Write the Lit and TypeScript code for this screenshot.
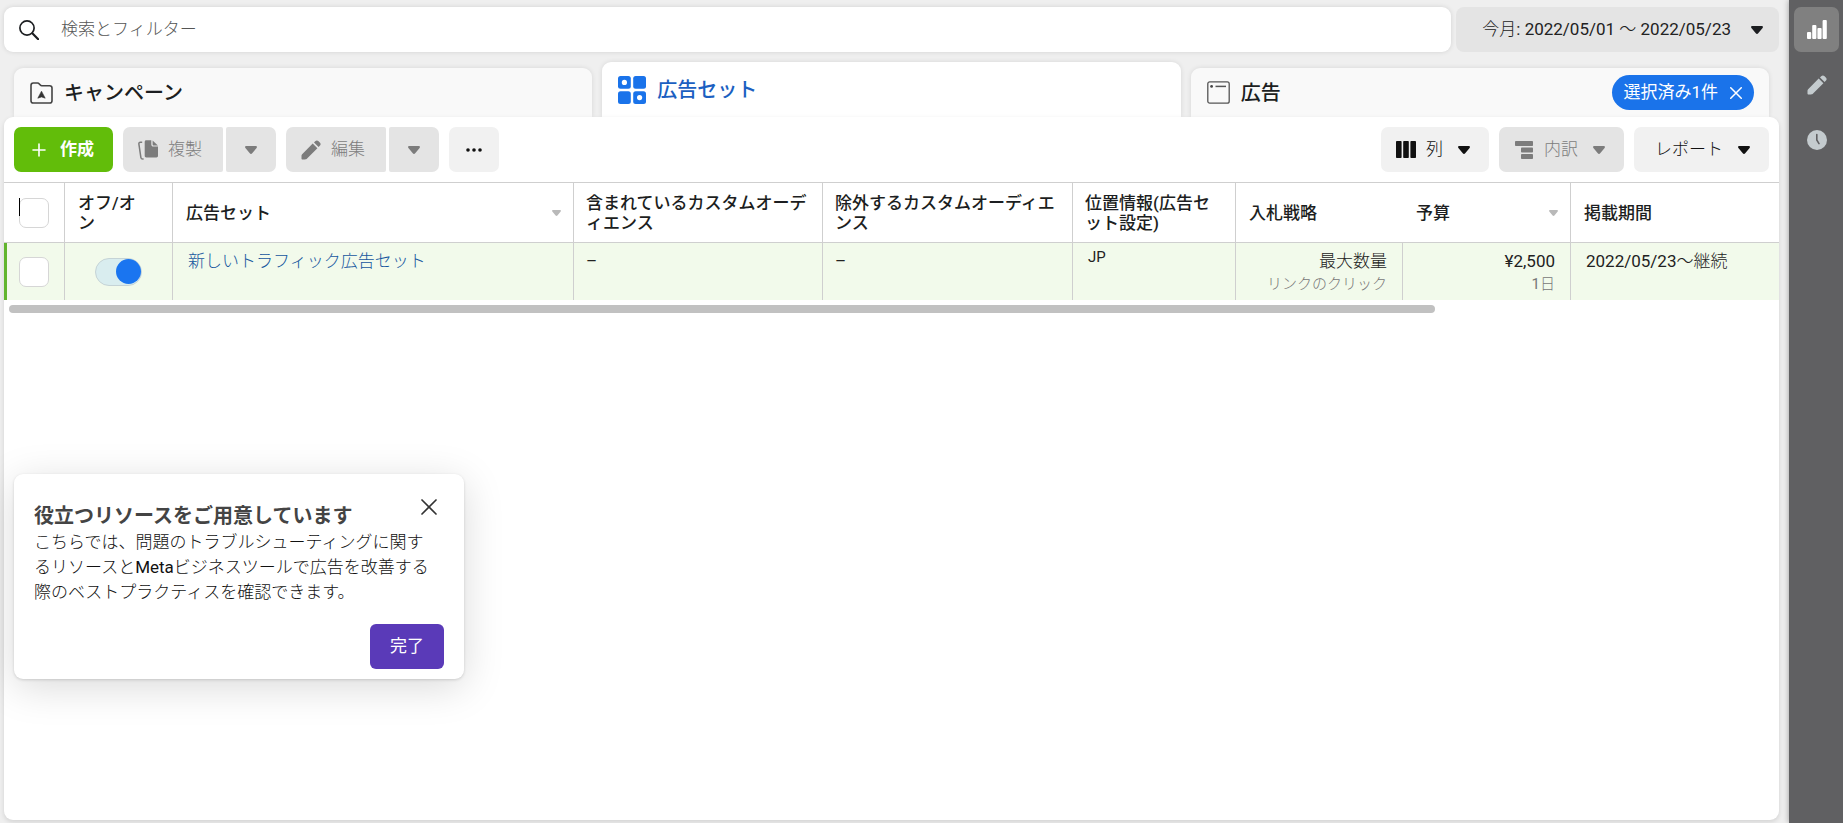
import { LitElement, html, css, svg, nothing } from "lit";
import { customElement } from "lit/decorators.js";

const caret = html`<svg class="caret" width="12" height="8" viewBox="0 0 12 8" aria-hidden="true">
  <path d="M1.2 0h9.6c1 0 1.500 1.100.8 1.900L7.200 7.300c-.6.8-1.800.8-2.400 0L.4 1.900C-.3 1.100.2 0 1.200 0z" fill="currentColor" />
</svg>`;

const pencil = html`<svg width="20" height="20" viewBox="0 0 20 20" aria-hidden="true">
  <path
    d="M11.700 3.600l4.700 4.700L6.100 18.600c-.7.7-1.200.9-2.100.9H1.600C.9 19.500.5 19.100.5 18.400V16c0-.9.2-1.400.9-2.100zM13 2.400 14.200 1.200c1.100-1.100 2.300-1.100 3.400 0l1.200 1.200c1.100 1.100 1.100 2.300 0 3.400L17.600 7z"
    fill="currentColor"
  />
</svg>`;

const cross = (size: number, weight: number) => svg`<svg width=${size} height=${size} viewBox="0 0 16 16" aria-hidden="true">
  <path d="M1 1l14 14M15 1L1 15" stroke="currentColor" stroke-width=${weight} stroke-linecap="round" fill="none" />
</svg>`;

const sharedText = css`
  button {
    font: inherit;
    color: inherit;
    border: 0;
    margin: 0;
    padding: 0;
    background: none;
    cursor: pointer;
  }
  svg {
    display: block;
    flex: none;
  }
`;

@customElement("ads-topbar")
class AdsTopbar extends LitElement {
  static styles = [
    sharedText,
    css`
      :host {
        display: flex;
        gap: 5px;
        height: 45px;
      }
      .search {
        flex: 1;
        display: flex;
        align-items: center;
        gap: 22px;
        padding: 0 15px;
        background: #fff;
        border-radius: 9px;
        box-shadow: 0 0 5px rgba(0, 0, 0, 0.12);
      }
      .search input {
        flex: 1;
        min-width: 0;
        border: 0;
        outline: 0;
        padding: 0;
        background: none;
        font: inherit;
        color: #1c1e21;
      }
      .search input::placeholder {
        color: #555;
        opacity: 1;
      }
      .date {
        display: flex;
        align-items: center;
        gap: 20px;
        padding: 0 16px 0 26px;
        background: #e4e4e4;
        border-radius: 8px;
        color: #222;
      }
      .date .caret {
        color: #1c1e21;
      }
    `,
  ];

  render() {
    return html`
      <label class="search">
        <svg width="20" height="20" viewBox="0 0 20 20" fill="none" stroke="#1c1e21" stroke-width="1.700" stroke-linecap="round" aria-hidden="true">
          <circle cx="8" cy="8" r="7.100" />
          <path d="M13.300 13.300 19.200 19.200" stroke-width="2.200" />
        </svg>
        <input type="text" placeholder="検索とフィルター" aria-label="検索とフィルター" />
      </label>
      <button class="date" aria-haspopup="dialog"><span>今月: 2022/05/01 ～ 2022/05/23</span>${caret}</button>
    `;
  }
}

@customElement("ads-tabs")
class AdsTabs extends LitElement {
  static styles = [
    sharedText,
    css`
      :host {
        display: flex;
        align-items: flex-end;
        gap: 10px;
        height: 55px;
        padding: 0 10px;
      }
      .tab {
        flex: 1 1 0;
        min-width: 0;
        height: 49px;
        display: flex;
        align-items: center;
        justify-content: space-between;
        padding: 0 15px 0 16px;
        box-sizing: border-box;
        border-radius: 9px 9px 0 0;
        background: #f9f9f9;
        box-shadow: 0 0 5px rgba(0, 0, 0, 0.1);
      }
      .tab.active {
        height: 55px;
        background: #fff;
      }
      .name {
        display: flex;
        align-items: center;
        gap: 11px;
        font-family: Roboto, "Noto Sans CJK JP", sans-serif;
        font-size: 20px;
        line-height: 28px;
        font-weight: 500;
        color: #1c1e21;
      }
      .active .name {
        color: #1b5fc1;
      }
      .chip {
        display: flex;
        align-items: center;
        gap: 12px;
        height: 35px;
        padding: 0 12px 0 11px;
        border-radius: 18px;
        background: #1a73ea;
        font-family: Roboto, "Noto Sans CJK JP", sans-serif;
        color: #fff;
      }
    `,
  ];

  render() {
    return html`
      <div class="tab">
        <button class="name">
          <svg width="23" height="22" viewBox="0 0 23 22" aria-hidden="true">
            <path d="M1 3.500C1 2 1.800 1 3.300 1H7.500c.8 0 1.300.3 1.800.9l1 1.200c.4.5.9.7 1.500.7H19.700C21.200 3.800 22 4.700 22 6.100V18.700c0 1.500-.8 2.300-2.300 2.300H3.300C1.800 21 1 20.200 1 18.700z" fill="none" stroke="#444" stroke-width="1.600" />
            <path d="M11.500 9.200 15.200 16.200 11.500 14.900 7.800 16.200z" fill="#333" stroke="#333" stroke-width=".6" stroke-linejoin="round" />
          </svg>
          キャンペーン
        </button>
      </div>
      <div class="tab active">
        <button class="name" aria-current="page">
          <svg width="28" height="28" viewBox="0 0 28 28" fill="#1a73ea" aria-hidden="true">
            <rect width="12.800" height="12.800" rx="2.500" />
            <rect x="15.200" width="12.800" height="12.800" rx="2.500" />
            <rect y="15.200" width="12.800" height="12.800" rx="2.500" />
            <rect x="15.200" y="15.200" width="12.800" height="12.800" rx="2.500" />
            <circle cx="6.400" cy="6.400" r="2.600" fill="#fff" />
            <circle cx="21.600" cy="21.600" r="2.600" fill="#fff" />
          </svg>
          広告セット
        </button>
      </div>
      <div class="tab">
        <button class="name">
          <svg width="23" height="23" viewBox="0 0 23 23" fill="none" stroke="#555" aria-hidden="true">
            <rect x=".8" y=".8" width="21.400" height="21.400" rx="2" stroke-width="1.300" />
            <circle cx="4.600" cy="5.400" r="1.400" fill="#444" stroke="none" />
            <path d="M8.500 5.400H19" stroke-width="1.500" />
          </svg>
          広告
        </button>
        <button class="chip" aria-label="選択済み1件 選択を解除">選択済み1件 ${cross(12, 2)}</button>
      </div>
    `;
  }
}

@customElement("ads-toolbar")
class AdsToolbar extends LitElement {
  static styles = [
    sharedText,
    css`
      :host {
        display: flex;
        justify-content: space-between;
        padding: 10px;
      }
      .group {
        display: flex;
        gap: 10px;
      }
      .split {
        display: flex;
        gap: 3px;
      }
      .btn {
        display: flex;
        align-items: center;
        gap: 10px;
        height: 45px;
        padding: 0 15px;
        border-radius: 7px;
        background: #f1f1f1;
        color: #111;
      }
      .btn:disabled {
        background: #e4e4e4;
        color: #7c7c7c;
        cursor: default;
      }
      .create {
        gap: 14px;
        padding: 0 19px 0 18px;
        background: #62bd0a;
        color: #fff;
        font-family: Roboto, "Noto Sans CJK JP", sans-serif;
        font-weight: 700;
      }
      .main {
        width: 100px;
        border-radius: 7px 2px 2px 7px;
      }
      .arrow {
        width: 50px;
        justify-content: center;
        border-radius: 2px 7px 7px 2px;
      }
      .more {
        width: 50px;
        justify-content: center;
      }
      .menu {
        padding: 0 19px 0 15px;
      }
      .menu .caret {
        margin-left: 5px;
      }
      .report {
        padding: 0 19px 0 21px;
      }
    `,
  ];

  render() {
    return html`
      <div class="group">
        <button class="btn create">
          <svg width="14" height="14" viewBox="0 0 14 14" stroke="#fff" stroke-width="1.600" stroke-linecap="round" aria-hidden="true">
            <path d="M7 1v12M1 7h12" />
          </svg>
          作成
        </button>
        <div class="split">
          <button class="btn main" disabled>
            <svg width="20" height="20" viewBox="0 0 20 20" fill="currentColor" aria-hidden="true">
              <path d="M8.300.3h5v4.200c0 1.300.8 2.100 2.100 2.100H20v9.200c0 1-.6 1.600-1.600 1.600H8.300c-1 0-1.600-.6-1.600-1.600V1.900c0-1 .6-1.600 1.600-1.600z" />
              <path d="M14.600.4 19.900 5.400H15.500c-.6 0-.9-.3-.9-.9z" />
              <path d="M4.200 2.300H2.400C1.300 2.300.7 3 .9 4.100L2.900 17.600c.2 1 .8 1.500 1.800 1.500h.9" fill="none" stroke="currentColor" stroke-width="1.500" />
            </svg>
            複製
          </button>
          <button class="btn arrow" disabled aria-label="複製オプション">${caret}</button>
        </div>
        <div class="split">
          <button class="btn main" disabled>${pencil}編集</button>
          <button class="btn arrow" disabled aria-label="編集オプション">${caret}</button>
        </div>
        <button class="btn more" aria-label="その他">
          <svg width="16" height="4" viewBox="0 0 16 4" fill="currentColor" aria-hidden="true">
            <circle cx="2" cy="2" r="1.800" /><circle cx="8" cy="2" r="1.800" /><circle cx="14" cy="2" r="1.800" />
          </svg>
        </button>
      </div>
      <div class="group">
        <button class="btn menu" aria-haspopup="menu">
          <svg width="20" height="17" viewBox="0 0 20 17" fill="currentColor" aria-hidden="true">
            <rect width="5.600" height="17" rx=".8" /><rect x="7.200" width="5.600" height="17" rx=".8" /><rect x="14.400" width="5.600" height="17" rx=".8" />
          </svg>
          列 ${caret}
        </button>
        <button class="btn menu" disabled aria-haspopup="menu">
          <svg width="20" height="18" viewBox="0 0 20 18" fill="currentColor" aria-hidden="true">
            <rect x="1" width="18" height="5" rx=".8" /><rect x="7" y="6.500" width="12" height="5" rx=".8" /><rect x="7" y="13" width="12" height="5" rx=".8" />
          </svg>
          内訳 ${caret}
        </button>
        <button class="btn menu report" aria-haspopup="menu">レポート ${caret}</button>
      </div>
    `;
  }
}

interface Column {
  key: string;
  label: string;
  width?: number;
  sortable?: boolean;
}

const columns: Column[] = [
  { key: "toggle", label: "オフ/オン", width: 108 },
  { key: "name", label: "広告セット", width: 401, sortable: true },
  { key: "included", label: "含まれているカスタムオーディエンス", width: 249 },
  { key: "excluded", label: "除外するカスタムオーディエンス", width: 250 },
  { key: "location", label: "位置情報(広告セット設定)", width: 163 },
  { key: "bid", label: "入札戦略", width: 167 },
  { key: "budget", label: "予算", width: 168, sortable: true },
  { key: "period", label: "掲載期間" },
];

@customElement("ads-table")
class AdsTable extends LitElement {
  static styles = [
    sharedText,
    css`
      :host {
        display: block;
      }
      table {
        width: 100%;
        table-layout: fixed;
        border-collapse: separate;
        border-spacing: 0;
        border-top: 1px solid #cfcfcf;
      }
      .check-col {
        width: 61px;
      }
      th,
      td {
        box-sizing: border-box;
        text-align: left;
        border-right: 1px solid #cfcfcf;
        color: #222;
      }
      th:last-child,
      td:last-child,
      th.bid {
        border-right: 0;
      }
      th {
        height: 60px;
        padding: 0 12px;
        border-bottom: 1px solid #cfcfcf;
        font-family: Roboto, "Noto Sans CJK JP", sans-serif;
        font-weight: 500;
        line-height: 20px;
        color: #1c1e21;
        word-break: break-all;
      }
      th.toggle {
        padding: 0 26px 0 13px;
      }
      th.name,
      th.bid,
      th.budget,
      th.period {
        padding-left: 13px;
      }
      .head {
        display: flex;
        align-items: center;
        justify-content: space-between;
      }
      .head .sort {
        color: #b9b9b9;
      }
      .sort svg {
        width: 9px;
        height: 6px;
      }
      td {
        height: 57px;
        padding: 6px 15px 4px;
        vertical-align: top;
        background: #f2faeb;
        line-height: 24px;
      }
      td.included,
      td.excluded {
        padding-left: 12px;
      }
      td.toggle {
        padding: 0;
        vertical-align: middle;
        text-align: center;
      }
      td.location {
        padding-top: 2px;
        font-size: 15px;
      }
      td.bid,
      td.budget {
        text-align: right;
      }
      .sub {
        display: block;
        font-size: 15px;
        line-height: 23px;
        color: #777;
      }
      .name a {
        color: #15569e;
        text-decoration: none;
      }
      th.check,
      td.check {
        position: relative;
        padding: 0 15px;
        vertical-align: middle;
      }
      td.check {
        padding-left: 12px;
        border-left: 3px solid #62b52e;
      }
      .cursor {
        position: absolute;
        left: 15px;
        top: 15px;
        width: 1px;
        height: 18px;
        background: #000;
      }
      .box {
        appearance: none;
        display: block;
        box-sizing: border-box;
        width: 30px;
        height: 30px;
        margin: 0;
        border: 1px solid #d6d6d6;
        border-radius: 7px;
        background: #fff;
      }
      .switch {
        appearance: none;
        display: inline-flex;
        justify-content: flex-end;
        align-items: center;
        box-sizing: border-box;
        width: 47px;
        height: 28px;
        margin: 0;
        border: 1px solid #c5d3d6;
        border-radius: 14px;
        background: #d9edef;
        vertical-align: middle;
      }
      .switch::before {
        content: "";
        width: 25px;
        height: 25px;
        border-radius: 50%;
        background: #1a75f0;
      }
      .switch:not(:checked) {
        justify-content: flex-start;
      }
      .track {
        padding: 5px;
      }
      .thumb {
        width: 80.8%;
        height: 8px;
        border-radius: 4px;
        background: #c1c1c1;
      }
    `,
  ];

  render() {
    return html`
      <table>
        <colgroup>
          <col class="check-col" />
          ${columns.map((c) => (c.width ? html`<col style="width:${c.width}px" />` : html`<col />`))}
        </colgroup>
        <thead>
          <tr>
            <th class="check"><input class="box" type="checkbox" aria-label="すべて選択" /><span class="cursor"></span></th>
            ${columns.map(
              (c) => html`<th class=${c.key} scope="col">
                <div class="head">
                  <span>${c.label}</span>${c.sortable
                    ? html`<button class="sort" aria-label="並べ替え">${caret}</button>`
                    : nothing}
                </div>
              </th>`
            )}
          </tr>
        </thead>
        <tbody>
          <tr>
            <td class="check"><input class="box" type="checkbox" aria-label="選択" /></td>
            <td class="toggle"><input class="switch" type="checkbox" role="switch" checked aria-label="オフ/オン" /></td>
            <td class="name"><a href="#adset">新しいトラフィック広告セット</a></td>
            <td class="included">–</td>
            <td class="excluded">–</td>
            <td class="location">JP</td>
            <td class="bid">最大数量<span class="sub">リンクのクリック</span></td>
            <td class="budget">¥2,500<span class="sub">1日</span></td>
            <td class="period">2022/05/23～継続</td>
          </tr>
        </tbody>
      </table>
      <div class="track"><div class="thumb"></div></div>
    `;
  }
}

@customElement("resource-notice")
class ResourceNotice extends LitElement {
  static styles = [
    sharedText,
    css`
      :host {
        display: block;
        box-sizing: border-box;
        width: 450px;
        padding: 20px 20px 10px;
        border-radius: 9px;
        background: #fff;
        box-shadow: 0 1px 3px rgba(0, 0, 0, 0.15), 0 8px 40px rgba(0, 0, 0, 0.15);
      }
      .top {
        display: flex;
        justify-content: space-between;
        align-items: flex-start;
      }
      h2 {
        margin: 0;
        padding-top: 8px;
        font-family: Roboto, "Noto Sans CJK JP", sans-serif;
        font-size: 20px;
        line-height: 28px;
        font-weight: 700;
        color: #444;
      }
      .close {
        padding: 5px 7px;
        color: #333;
      }
      p {
        margin: 0;
        padding-right: 8px;
        line-height: 25px;
        color: #111;
      }
      .actions {
        display: flex;
        justify-content: flex-end;
        padding-top: 19px;
      }
      .done {
        height: 45px;
        padding: 0 20px;
        border-radius: 6px;
        background: #5a3ab8;
        font-family: Roboto, "Noto Sans CJK JP", sans-serif;
        color: #fff;
      }
    `,
  ];

  render() {
    return html`
      <div class="top">
        <h2>役立つリソースをご用意しています</h2>
        <button class="close" aria-label="閉じる">${cross(16, 1.7)}</button>
      </div>
      <p>こちらでは、問題のトラブルシューティングに関するリソースとMetaビジネスツールで広告を改善する際のベストプラクティスを確認できます。</p>
      <div class="actions"><button class="done">完了</button></div>
    `;
  }
}

@customElement("side-rail")
class SideRail extends LitElement {
  static styles = [
    sharedText,
    css`
      :host {
        display: flex;
        flex-direction: column;
        align-items: center;
        gap: 10px;
        width: 54px;
        padding: 7px 0 0 1px;
        box-sizing: border-box;
        background: #606062;
        box-shadow: 0 0 6px rgba(0, 0, 0, 0.35);
        color: #c4cbce;
      }
      button {
        display: flex;
        align-items: center;
        justify-content: center;
        width: 45px;
        height: 45px;
        border-radius: 7px;
      }
      .on {
        background: #808080;
        color: #fff;
      }
    `,
  ];

  render() {
    return html`
      <button class="on" aria-label="レポート">
        <svg width="20" height="19" viewBox="0 0 20 19" fill="currentColor" aria-hidden="true">
          <rect y="12" width="4.200" height="7" rx="1" /><rect x="5.200" y="5" width="4.200" height="14" rx="1" />
          <rect x="10.400" y="8" width="4.200" height="11" rx="1" /><rect x="15.600" width="4.200" height="19" rx="1" />
        </svg>
      </button>
      <button aria-label="編集">${pencil}</button>
      <button aria-label="履歴">
        <svg width="20" height="20" viewBox="0 0 20 20" aria-hidden="true">
          <circle cx="10" cy="10" r="10" fill="currentColor" />
          <path d="M9.800 4.600V10l2.200 3.600" fill="none" stroke="#606062" stroke-width="1.600" stroke-linecap="round" />
        </svg>
      </button>
    `;
  }
}

@customElement("app-root")
class AppRoot extends LitElement {
  static styles = css`
    :host {
      display: flex;
      min-height: 100vh;
      background: #efefef;
      font-family: Roboto, "Noto Sans CJK JP Light", "Noto Sans CJK JP DemiLight", "Noto Sans CJK JP", sans-serif;
      font-size: 17px;
      line-height: 25px;
      color: #1c1e21;
    }
    main {
      flex: 1;
      min-width: 0;
      display: flex;
      flex-direction: column;
      padding: 7px 10px 3px 4px;
    }
    ads-tabs {
      margin-top: 10px;
    }
    .panel {
      position: relative;
      flex: 1;
      background: #fff;
      border-radius: 9px;
      box-shadow: 0 2px 5px rgba(0, 0, 0, 0.12);
    }
    resource-notice {
      position: absolute;
      left: 10px;
      bottom: 141px;
    }
  `;

  render() {
    return html`
      <main>
        <ads-topbar></ads-topbar>
        <ads-tabs></ads-tabs>
        <section class="panel">
          <ads-toolbar></ads-toolbar>
          <ads-table></ads-table>
          <resource-notice></resource-notice>
        </section>
      </main>
      <side-rail></side-rail>
    `;
  }
}
